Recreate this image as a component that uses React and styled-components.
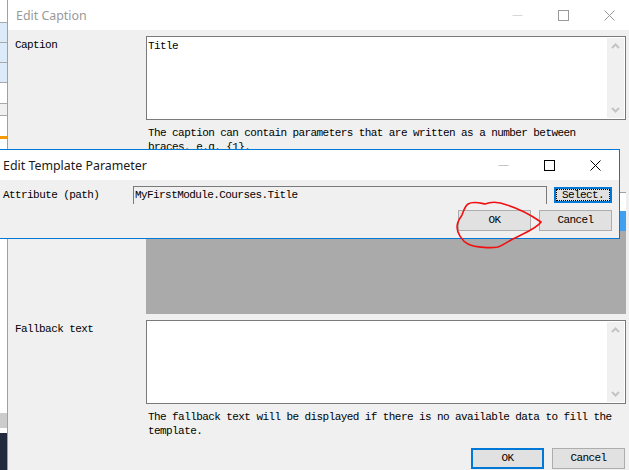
import React from 'react';
import styled, { createGlobalStyle } from 'styled-components';

const GlobalStyle = createGlobalStyle`
  html, body { margin: 0; padding: 0; background: #f0f0f0; }
  body { width: 629px; height: 470px; overflow: hidden; }
`;

const mono = `"Liberation Mono", "DejaVu Sans Mono", monospace`;
const ui = `"Noto Sans", "Open Sans", sans-serif`;

const Page = styled.div`
  position: relative;
  display: flex;
  width: 629px;
  height: 470px;
  overflow: hidden;
  font-family: ${mono};
  font-size: 11px;
  letter-spacing: -0.58px;
  color: #000;
`;

const Strip = styled.div`
  display: flex;
  flex-direction: column;
  width: 7px;
  flex: none;
`;

const StripRow = styled.div`
  height: ${p => p.h}px;
  background: ${p => p.bg || '#fff'};
  border-bottom: ${p => (p.line ? '1px solid #a9a9a9' : 'none')};
  box-sizing: border-box;
`;

const Window = styled.div`
  display: flex;
  flex-direction: column;
  flex: 1;
  background: #f0f0f0;
  border-left: 1px solid #a0a0a0;
`;

const TitleBar = styled.div`
  display: flex;
  align-items: center;
  justify-content: space-between;
  height: ${p => p.h}px;
  flex: none;
  background: #fff;
  padding: 0 ${p => p.pr}px 0 ${p => p.pl}px;
`;

const Title = styled.div`
  font-family: ${ui};
  font-size: 12.4px;
  letter-spacing: 0;
  color: ${p => (p.dim ? '#999' : '#1a1a1a')};
`;

const Controls = styled.div`
  display: flex;
  gap: 35px;
  align-items: center;
  color: ${p => p.color};
`;

const ControlIcon = styled.svg`
  display: block;
  width: 11px;
  height: 11px;
  fill: none;
  stroke: currentColor;
  stroke-width: 1;
`;

const MinIcon = styled(ControlIcon)`
  color: ${p => p.$tone};
`;

const Body = styled.div`
  display: grid;
  grid-template-columns: 138px 480px;
  padding-top: 6px;
`;

const Label = styled.div`
  padding-left: 7px;
  padding-top: 2px;
  line-height: 14px;
`;

const Column = styled.div`
  display: flex;
  flex-direction: column;
`;

const TextBox = styled.div`
  position: relative;
  box-sizing: border-box;
  height: 84px;
  background: #fff;
  border: 1px solid #7a7a7a;
  padding: 2px 1px;
  line-height: 14px;
`;

const ScrollBar = styled.div`
  position: absolute;
  top: 1px;
  right: 1px;
  bottom: 1px;
  width: 17px;
  display: flex;
  flex-direction: column;
  justify-content: space-between;
  align-items: center;
  padding: 5px 0;
  box-sizing: border-box;
  background: #f0f0f0;
`;

const Chevron = styled.svg`
  display: block;
  width: 9px;
  height: 6px;
  fill: none;
  stroke: #c4c4c4;
  stroke-width: 2;
`;

const Hint = styled.div`
  padding: 6px 2px 0;
  width: ${p => p.w}px;
  line-height: 14px;
  height: ${p => p.h}px;
  box-sizing: border-box;
`;

const Panel = styled.div`
  display: flex;
  flex-direction: column;
  height: 122px;
  background: #aaa;
`;

const PanelRow = styled.div`
  height: ${p => p.h}px;
  box-sizing: border-box;
  background: ${p => p.bg};
  border-top: ${p => (p.line ? '1px solid #a0a0a0' : 'none')};
`;

const Gap = styled.div`
  height: 6px;
`;

const Footer = styled.div`
  display: flex;
  justify-content: flex-end;
  gap: 8px;
  padding-right: 4px;
  margin-top: auto;
  padding-bottom: 1px;
`;

const Button = styled.div`
  display: flex;
  align-items: center;
  justify-content: center;
  box-sizing: border-box;
  width: ${p => p.w || 73}px;
  height: ${p => p.h || 21}px;
  padding-bottom: 1px;
  background: #e1e1e1;
  border: ${p => (p.primary ? '2px solid #0078d7' : '1px solid #adadad')};
  line-height: 14px;
`;

const SelectButton = styled(Button)`
  padding-bottom: 0;
`;

const SelectFocus = styled.span`
  display: flex;
  align-items: center;
  justify-content: center;
  width: 100%;
  height: 100%;
  outline: 1px dotted #000;
  outline-offset: -1px;
`;

const Dialog = styled.div`
  position: absolute;
  left: 0;
  top: 149px;
  width: 620px;
  height: 90px;
  box-sizing: border-box;
  display: flex;
  flex-direction: column;
  background: #f0f0f0;
  border: 1px solid #0078d7;
  border-left: none;
`;

const DialogBody = styled.div`
  display: flex;
  flex-direction: column;
  padding: 6px 7px 0 3px;
  gap: 6px;
`;

const FieldRow = styled.div`
  display: flex;
  align-items: flex-start;
`;

const FieldLabel = styled.div`
  width: 130px;
  flex: none;
  line-height: 18px;
`;

const PathInput = styled.div`
  box-sizing: border-box;
  width: 414px;
  height: 18px;
  border: 1px solid #7a7a7a;
  border-bottom: none;
  padding: 1px 1px 0;
  line-height: 15px;
`;

const ActionRow = styled.div`
  display: flex;
  justify-content: flex-end;
  gap: 8px;
`;

const SelectSlot = styled.div`
  margin-left: 7px;
  margin-top: 1px;
`;

const Scribble = styled.svg`
  position: absolute;
  left: 0;
  top: 0;
  width: 629px;
  height: 470px;
  pointer-events: none;
  fill: none;
  stroke: #f01010;
  stroke-width: 1.6;
`;

const WindowButtons = ({ minTone, color }) => (
  <Controls color={color}>
    <MinIcon viewBox="0 0 11 11" $tone={minTone}><path d="M0.5 5.5h10" /></MinIcon>
    <ControlIcon viewBox="0 0 11 11"><rect x="0.5" y="0.5" width="10" height="10" /></ControlIcon>
    <ControlIcon viewBox="0 0 11 11"><path d="M0.5 0.5l10 10M10.5 0.5l-10 10" /></ControlIcon>
  </Controls>
);

const Scroll = () => (
  <ScrollBar>
    <Chevron viewBox="0 0 9 6"><path d="M1 5l3.5-3.5L8 5" /></Chevron>
    <Chevron viewBox="0 0 9 6"><path d="M1 1l3.5 3.5L8 1" /></Chevron>
  </ScrollBar>
);

const stripRows = [
  { h: 23, line: true },
  { h: 20, bg: '#dcebf9', line: true },
  { h: 20, bg: '#dcebf9', line: true },
  { h: 20, bg: '#dcebf9', line: true },
  { h: 21, line: true },
  { h: 12, bg: '#f0f0f0', line: true },
  { h: 20 },
  { h: 3, bg: '#f59a00' },
  { h: 274 },
  { h: 15, bg: '#cccccc' },
  { h: 5 },
  { h: 37, bg: '#222b3e' },
];

export default function App() {
  return (
    <Page>
      <GlobalStyle />
      <Strip>
        {stripRows.map((row, i) => (
          <StripRow key={i} {...row} />
        ))}
      </Strip>
      <Window>
        <TitleBar h={30} pl={8} pr={14}>
          <Title dim>Edit Caption</Title>
          <WindowButtons minTone="#d8d8d8" color="#999" />
        </TitleBar>
        <Body>
          <Label>Caption</Label>
          <Column>
            <TextBox>
              Title
              <Scroll />
            </TextBox>
            <Hint h={72} w={440}>
              The caption can contain parameters that are written as a number between braces, e.g. {'{1}'}.
            </Hint>
            <Panel>
              <PanelRow h={19} bg="#fff" line />
              <PanelRow h={20} bg="#3f9ff0" />
            </Panel>
            <Gap />
          </Column>
          <Label>Fallback text</Label>
          <Column>
            <TextBox>
              <Scroll />
            </TextBox>
            <Hint h={44} w={480}>
              The fallback text will be displayed if there is no available data to fill the template.
            </Hint>
          </Column>
        </Body>
        <Footer>
          <Button primary>OK</Button>
          <Button>Cancel</Button>
        </Footer>
      </Window>

      <Dialog>
        <TitleBar h={30} pl={3} pr={18}>
          <Title>Edit Template Parameter</Title>
          <WindowButtons minTone="#c4c4c4" color="#000" />
        </TitleBar>
        <DialogBody>
          <FieldRow>
            <FieldLabel>Attribute (path)</FieldLabel>
            <PathInput>MyFirstModule.Courses.Title</PathInput>
            <SelectSlot>
              <SelectButton primary w={58} h={16}>
                <SelectFocus>Select.</SelectFocus>
              </SelectButton>
            </SelectSlot>
          </FieldRow>
          <ActionRow>
            <Button>OK</Button>
            <Button>Cancel</Button>
          </ActionRow>
        </DialogBody>
      </Dialog>

      <Scribble viewBox="0 0 629 470">
        <path d="M485 204C490 202 497 201 507 205C517 208 531 215 541 222C537 228 527 232 517 237C508 241 504 245 498 247C492 248 476 248 468 244C462 241 457 233 457 227C457 221 461 217 462 215C464 210 465 206 468 204C473 201 480 203 485 204Z" />
      </Scribble>
    </Page>
  );
}
